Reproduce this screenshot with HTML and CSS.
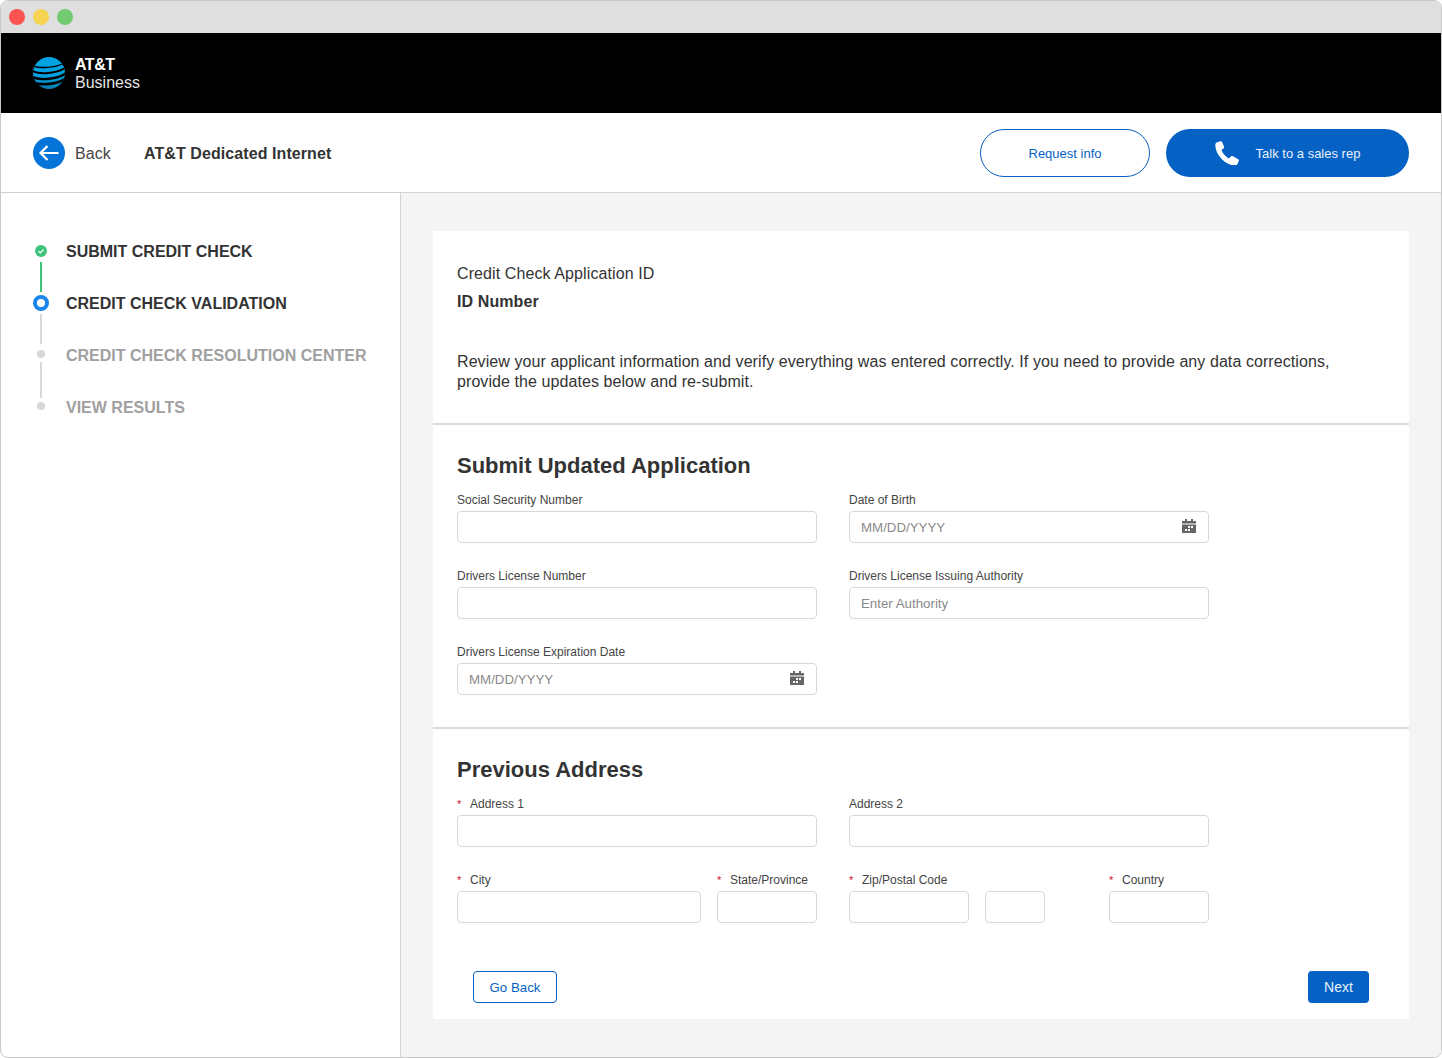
FILE: index.html
```html
<!DOCTYPE html>
<html lang="en">
<head>
    <meta charset="UTF-8">
    <meta name="viewport" content="width=device-width, initial-scale=1.0">
    <title>Credit Check Validation</title>
    <link rel="stylesheet" href="styles.css">
</head>
<body>
    <div class="window">
        <div class="titlebar">
            <span class="light light-red"></span>
            <span class="light light-yellow"></span>
            <span class="light light-green"></span>
        </div>

        <header class="brandbar">
            <svg class="globe" width="32" height="32" viewBox="0 0 32 32">
                <defs>
                    <clipPath id="globeclip"><circle cx="16" cy="16" r="16"></circle></clipPath>
                    <linearGradient id="globefill" x1="0" y1="0" x2="0" y2="1">
                        <stop offset="0.6" stop-color="#00a2e0"></stop>
                        <stop offset="1" stop-color="#0a7cb0"></stop>
                    </linearGradient>
                </defs>
                <g clip-path="url(#globeclip)">
                    <rect width="32" height="32" fill="url(#globefill)"></rect>
                    <path d="M-1 8.5C6 12 22 11 33 5.5" stroke="#000" stroke-width="1.4" fill="none"></path>
                    <path d="M-1 14C7 18 24 16.500 33 10.500" stroke="#000" stroke-width="2" fill="none"></path>
                    <path d="M-1 20C8 24 25 22 33 16" stroke="#000" stroke-width="2.400" fill="none"></path>
                    <path d="M0 25.500C9 29 25 27 33 21.500" stroke="#000" stroke-width="2.600" fill="none"></path>
                </g>
            </svg>
            <div class="brandname">
                <strong>AT&amp;T</strong>
                <span>Business</span>
            </div>
        </header>

        <nav class="subbar">
            <a class="back" href="#">
                <svg width="32" height="32" viewBox="0 0 32 32">
                    <circle cx="16" cy="16" r="16" fill="#0574d8"></circle>
                    <path d="M25.500 16H7.500M14.500 9l-7 7 7 7" stroke="#fff" stroke-width="2.200" fill="none"></path>
                </svg>
                <span class="nudge">Back</span>
            </a>
            <span class="product nudge">AT&amp;T Dedicated Internet</span>
            <a class="pill pill-outline" href="#"><span class="nudge">Request info</span></a>
            <a class="pill pill-solid" href="#">
                <svg width="25" height="24" viewBox="0 0 25 24">
                    <path d="M1.800 1.600 5.200.3c.7-.3 1.500 0 1.800.7l2 4.600c.3.7.1 1.400-.5 1.800L6.400 9c1.200 3.300 4.100 6.600 7.400 8.400l2.200-2c.5-.5 1.300-.6 1.900-.2l5.300 3c.6.4.9 1.100.6 1.800l-1.500 3.200c-.5 1-1.500 1.600-2.600 1.500C9.500 23.500.3 13.500.3 3.800c0-1 .6-1.800 1.500-2.200z" fill="#fff"></path>
                </svg>
                <span class="nudge">Talk to a sales rep</span>
            </a>
        </nav>

        <div class="content">
            <aside class="sidebar">
                <div class="step step-done">
                    <div class="step-marker">
                        <span class="step-dotbox">
                            <svg width="12" height="12" viewBox="0 0 12 12">
                                <circle cx="6" cy="6" r="6" fill="#3fc27a"></circle>
                                <path d="M3.500 6.200l1.800 1.700 3.200-3.400" stroke="#fff" stroke-width="1.200" fill="none"></path>
                            </svg>
                        </span>
                        <span class="step-line"></span>
                    </div>
                    <span class="step-label">SUBMIT CREDIT CHECK</span>
                </div>
                <div class="step step-current">
                    <div class="step-marker">
                        <span class="step-dotbox"><span class="ring"></span></span>
                        <span class="step-line"></span>
                    </div>
                    <span class="step-label">CREDIT CHECK VALIDATION</span>
                </div>
                <div class="step step-todo">
                    <div class="step-marker">
                        <span class="step-dotbox"><span class="dot"></span></span>
                        <span class="step-line"></span>
                    </div>
                    <span class="step-label">CREDIT CHECK RESOLUTION CENTER</span>
                </div>
                <div class="step step-todo">
                    <div class="step-marker">
                        <span class="step-dotbox"><span class="dot"></span></span>
                    </div>
                    <span class="step-label">VIEW RESULTS</span>
                </div>
            </aside>

            <main class="main">
                <div class="card">
                    <section class="intro">
                        <p class="app-id">Credit Check Application ID</p>
                        <p class="id-number">ID Number</p>
                        <p class="review">Review your applicant information and verify everything was entered correctly. If you need to provide any data corrections, provide the updates below and re-submit.</p>
                    </section>

                    <section class="formsection">
                        <h2>Submit Updated Application</h2>
                        <div class="formgrid">
                            <div class="field">
                                <label>Social Security Number</label>
                                <div class="inputbox"></div>
                            </div>
                            <div class="field">
                                <label>Date of Birth</label>
                                <div class="inputbox">
                                    <span class="placeholder">MM/DD/YYYY</span>
                                    <svg class="cal" width="14" height="14" viewBox="0 0 14 14">
                                        <path d="M3 0h2v2h4V0h2v2h3v2.500H0V2h3z" fill="#666"></path>
                                        <path d="M0 5.500h14V14H0zM6 7v2h2V7zm3 0v2h2V7zM3 10v2h2v-2zm3 0v2h2v-2z" fill="#666" fill-rule="evenodd"></path>
                                    </svg>
                                </div>
                            </div>
                            <div class="field">
                                <label>Drivers License Number</label>
                                <div class="inputbox"></div>
                            </div>
                            <div class="field">
                                <label>Drivers License Issuing Authority</label>
                                <div class="inputbox"><span class="placeholder">Enter Authority</span></div>
                            </div>
                            <div class="field">
                                <label>Drivers License Expiration Date</label>
                                <div class="inputbox">
                                    <span class="placeholder">MM/DD/YYYY</span>
                                    <svg class="cal" width="14" height="14" viewBox="0 0 14 14">
                                        <path d="M3 0h2v2h4V0h2v2h3v2.500H0V2h3z" fill="#666"></path>
                                        <path d="M0 5.500h14V14H0zM6 7v2h2V7zm3 0v2h2V7zM3 10v2h2v-2zm3 0v2h2v-2z" fill="#666" fill-rule="evenodd"></path>
                                    </svg>
                                </div>
                            </div>
                        </div>
                    </section>

                    <section class="formsection formsection-last">
                        <h2>Previous Address</h2>
                        <div class="formgrid">
                            <div class="field">
                                <label class="req">Address 1</label>
                                <div class="inputbox"></div>
                            </div>
                            <div class="field">
                                <label>Address 2</label>
                                <div class="inputbox"></div>
                            </div>
                            <div class="fieldrow">
                                <div class="field w-city">
                                    <label class="req">City</label>
                                    <div class="inputbox"></div>
                                </div>
                                <div class="field w-100">
                                    <label class="req">State/Province</label>
                                    <div class="inputbox"></div>
                                </div>
                            </div>
                            <div class="fieldrow">
                                <div class="field w-zip">
                                    <label class="req">Zip/Postal Code</label>
                                    <div class="inputbox"></div>
                                </div>
                                <div class="field w-ext">
                                    <label>&nbsp;</label>
                                    <div class="inputbox"></div>
                                </div>
                                <div class="field w-100 push">
                                    <label class="req">Country</label>
                                    <div class="inputbox"></div>
                                </div>
                            </div>
                        </div>
                        <div class="actions">
                            <a class="btn btn-outline" href="#">Go Back</a>
                            <a class="btn btn-solid" href="#">Next</a>
                        </div>
                    </section>
                </div>
            </main>
        </div>
    </div>
</body>
</html>
```

FILE: styles.css
```css
* {
    box-sizing: border-box;
}
html, body {
    margin: 0;
    height: 100%;
}
body {
    background-color: #fff;
    font-family: "Liberation Sans", Arial, sans-serif;
    color: #333;
}
a {
    text-decoration: none;
}
p, h2 {
    margin: 0;
}
.nudge {
    padding-top: 2px;
}

.window {
    display: flex;
    flex-direction: column;
    height: 1058px;
    border: 1px solid #c8c8c8;
    border-radius: 8px;
    overflow: hidden;
}
.titlebar {
    display: flex;
    align-items: center;
    gap: 8px;
    flex: none;
    height: 32px;
    padding-left: 8px;
    background-color: #dfdfdf;
}
.light {
    width: 16px;
    height: 16px;
    border-radius: 50%;
}
.light-red { background-color: #fc5453; }
.light-yellow { background-color: #f7d354; }
.light-green { background-color: #72cb71; }

.brandbar {
    display: flex;
    align-items: center;
    gap: 10px;
    flex: none;
    height: 80px;
    padding-left: 32px;
    background-color: #000;
}
.brandname {
    display: flex;
    flex-direction: column;
    padding-top: 2px;
    color: #fff;
    font-size: 16px;
    line-height: 18px;
}
.brandname strong {
    letter-spacing: -0.5px;
}
.brandname span {
    color: #e6e6e6;
}

.subbar {
    display: flex;
    align-items: center;
    flex: none;
    height: 80px;
    padding: 0 32px;
    border-bottom: 1px solid #d2d2d2;
}
.back {
    display: flex;
    align-items: center;
    gap: 10px;
    color: #454545;
    font-size: 16px;
    letter-spacing: 0.1px;
}
.product {
    margin-left: 33px;
    margin-right: auto;
    font-size: 16px;
    font-weight: bold;
    letter-spacing: 0.08px;
}
.pill {
    display: flex;
    align-items: center;
    justify-content: center;
    height: 48px;
    border-radius: 24px;
    font-size: 13px;
}
.pill-outline {
    width: 170px;
    border: 1px solid #0562c4;
    color: #0562c4;
}
.pill-solid {
    gap: 16px;
    width: 243px;
    margin-left: 16px;
    background-color: #0562c4;
    color: #e8f0fa;
}

.content {
    display: flex;
    flex: 1;
    min-height: 0;
}
.sidebar {
    flex: none;
    width: 400px;
    padding: 48px 0 0 31px;
    border-right: 1px solid #d2d2d2;
}
.step {
    display: flex;
    gap: 16px;
    height: 52px;
}
.step-marker {
    display: flex;
    flex-direction: column;
    align-items: center;
    flex: none;
    width: 18px;
}
.step-dotbox {
    display: flex;
    align-items: center;
    justify-content: center;
    flex: none;
    height: 20px;
}
.step-line {
    flex: 1;
    width: 2px;
    margin: 1px 0;
    background-color: #d8d8d8;
}
.step-done .step-line {
    background-color: #3fc27a;
}
.step-todo .step-dotbox {
    padding-bottom: 2px;
}
.step-todo .step-line {
    margin: -3px 0 -1px;
}
.ring {
    width: 16px;
    height: 16px;
    border: 4px solid #1a85ea;
    border-radius: 50%;
}
.dot {
    width: 8px;
    height: 8px;
    border-radius: 50%;
    background-color: #d8d8d8;
}
.step-label {
    margin-top: 1px;
    font-size: 16px;
    font-weight: bold;
    line-height: 20px;
}
.step-todo .step-label {
    color: #a0a0a0;
}

.main {
    flex: 1;
    min-width: 0;
    padding: 38px 32px 0;
    background-color: #f4f4f4;
}
.card {
    height: 788px;
    background-color: #fff;
}
.intro {
    height: 194px;
    padding: 33px 24px 0;
    border-bottom: 2px solid #dcdcdc;
    font-size: 16px;
    line-height: 20px;
    letter-spacing: 0.1px;
}
.id-number {
    margin-top: 8px;
    font-weight: bold;
}
.review {
    max-width: 900px;
    margin-top: 40px;
    letter-spacing: 0.075px;
}
.formsection {
    height: 304px;
    padding: 28px 24px 0;
    border-bottom: 2px solid #dcdcdc;
}
.formsection-last {
    height: auto;
    border-bottom: none;
}
.formsection h2 {
    font-size: 22px;
    line-height: 26px;
    font-weight: bold;
}
.formgrid {
    display: grid;
    grid-template-columns: 360px 360px;
    column-gap: 32px;
    row-gap: 21px;
    margin-top: 9px;
}
.fieldrow {
    display: flex;
    gap: 16px;
}
.field label {
    display: block;
    height: 23px;
    font-size: 12px;
    line-height: 24px;
    color: #444;
}
.field label.req::before {
    content: "*";
    display: inline-block;
    width: 13px;
    color: #c8102e;
    font-size: 11px;
}
.inputbox {
    display: flex;
    align-items: center;
    justify-content: space-between;
    height: 32px;
    padding: 0 11px;
    border: 1px solid #d8d8d8;
    border-radius: 4px;
    background-color: #fff;
}
.placeholder {
    color: #8a8a8a;
    font-size: 13.300px;
}
.cal {
    margin-top: -3px;
    margin-right: 1px;
}
.w-city { width: 244px; }
.w-100 { width: 100px; }
.w-zip { width: 120px; }
.w-ext { width: 60px; }
.push { margin-left: 48px; flex: none; }

.actions {
    display: flex;
    justify-content: space-between;
    margin-top: 48px;
    padding: 0 16px;
}
.btn {
    display: flex;
    align-items: center;
    justify-content: center;
    height: 32px;
    border-radius: 4px;
    font-size: 14px;
}
.btn-outline {
    width: 84px;
    border: 1px solid #0562c4;
    color: #0562c4;
    font-size: 13.300px;
}
.btn-solid {
    width: 61px;
    background-color: #0562c4;
    color: #e8f0fa;
}
```
